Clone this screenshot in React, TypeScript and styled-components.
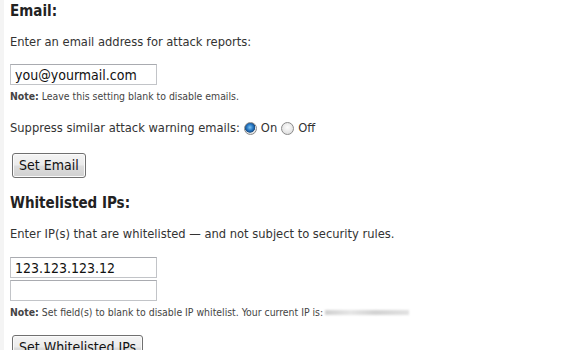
import styled, { createGlobalStyle } from "styled-components"

const GlobalStyle = createGlobalStyle`
  html, body {
    margin: 0;
    padding: 0;
    background: #fff;
  }
  body {
    font-family: "DejaVu Sans Condensed", "DejaVu Sans", Tahoma, sans-serif;
    color: #333;
  }
`

const Page = styled.div`
  min-height: 350px;
  border-left: 4px solid #f4f4f4;
  padding: 0 0 0 6px;
  overflow: hidden;
`

const Section = styled.section`
  display: flex;
  flex-direction: column;
  align-items: flex-start;
`

const Heading = styled.h3`
  margin: ${(p) => p.$gap ?? 0}px 0 0;
  padding-top: 2px;
  height: 22px;
  font-size: 15px;
  font-weight: bold;
  color: #222;
  line-height: 18px;
`

const Text = styled.p`
  margin: 10px 0 0;
  font-size: 12.8px;
  line-height: 16px;
  color: #333;
`

const Field = styled.input`
  box-sizing: border-box;
  width: 147px;
  height: 21px;
  margin: ${(p) => p.$gap ?? 14}px 0 0;
  padding: 0 4px;
  border: 1px solid #c2c4c8;
  border-top-color: #a9abb0;
  font-family: inherit;
  font-size: 14px;
  color: #111;
  outline: none;
`

const Note = styled.div`
  margin-top: 5px;
  font-size: 10.4px;
  line-height: 12px;
  color: #444;
  display: flex;
  align-items: center;

  b {
    margin-right: 3px;
  }
`

const BlurredIp = styled.span`
  display: inline-block;
  width: 84px;
  height: 5px;
  margin-left: 2px;
  background: linear-gradient(90deg, #cfcfcf, #e6e6e6 30%, #d2d2d2 60%, #e2e2e2);
  filter: blur(0.8px);
`

const RadioRow = styled.div`
  margin-top: 18px;
  display: flex;
  align-items: center;
  font-size: 12.8px;
  line-height: 16px;
  color: #333;
`

const Radio = styled.input.attrs({ type: "radio" })`
  appearance: none;
  box-sizing: border-box;
  width: 13px;
  height: 13px;
  margin: 0 4px 0 4px;
  border-radius: 50%;
  border: 1px solid #8a8a8a;
  background: radial-gradient(circle at 50% 40%, #fdfdfd 0%, #e2e2e2 70%, #cfcfcf 100%);

  &:checked {
    background: radial-gradient(circle at 45% 40%, #7fc4f2 0%, #2677c4 35%, #1a4f86 55%, #e8e8e8 62%, #d4d4d4 100%);
  }
`

const Button = styled.button`
  margin-top: ${(p) => p.$gap ?? 17}px;
  margin-left: 2px;
  height: 25px;
  padding: 0 6px 1px;
  border: 1px solid #707070;
  border-radius: 3px;
  background: linear-gradient(#f4f4f4 0%, #ebebeb 48%, #dddddd 52%, #d0d0d0 100%);
  font-family: inherit;
  font-size: 14px;
  color: #111;
  box-shadow: inset 0 0 0 1px #fbfbfb;
`

export default function App() {
  return (
    <>
      <GlobalStyle />
      <Page>
        <Section>
          <Heading>Email:</Heading>
          <Text>Enter an email address for attack reports:</Text>
          <Field defaultValue="you@yourmail.com" />
          <Note>
            <b>Note:</b> Leave this setting blank to disable emails.
          </Note>
          <RadioRow>
            Suppress similar attack warning emails:
            <Radio name="suppress" defaultChecked /> On
            <Radio name="suppress" /> Off
          </RadioRow>
          <Button>Set Email</Button>
        </Section>
        <Section>
          <Heading $gap={14}>Whitelisted IPs:</Heading>
          <Text>Enter IP(s) that are whitelisted — and not subject to security rules.</Text>
          <Field defaultValue="123.123.123.12" $gap={15} />
          <Field defaultValue="" $gap={2} />
          <Note>
            <b>Note:</b> Set field(s) to blank to disable IP whitelist. Your current IP is:
            <BlurredIp />
          </Note>
          <Button $gap={17}>Set Whitelisted IPs</Button>
        </Section>
      </Page>
    </>
  )
}
